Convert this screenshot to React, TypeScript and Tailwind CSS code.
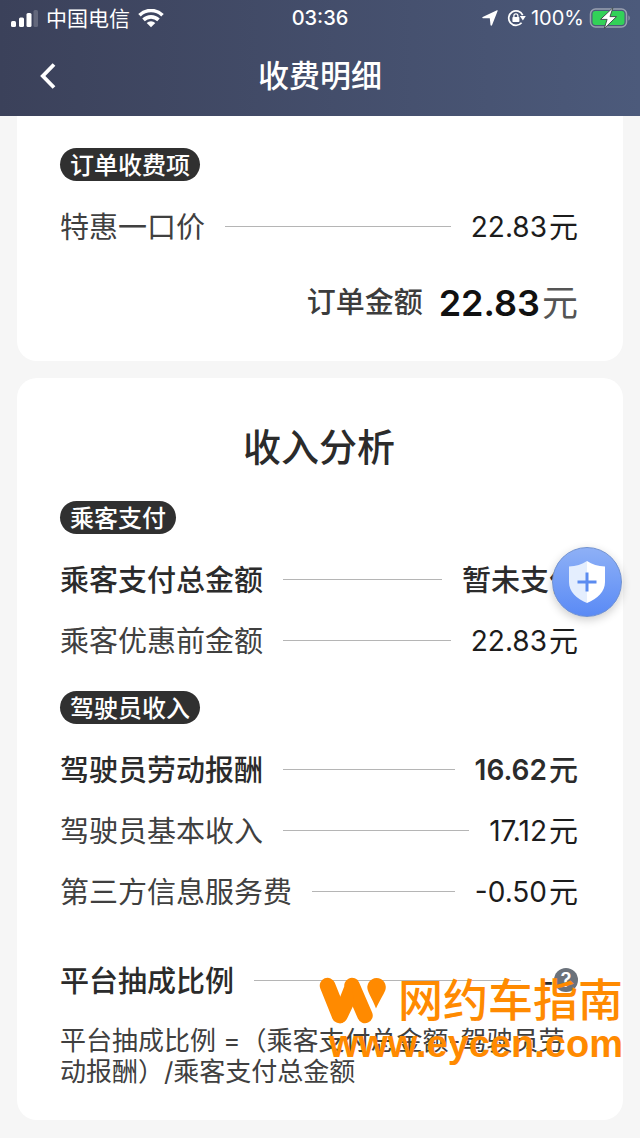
import type { ReactNode } from "react"

type FeeRow = {
  label: string
  amount?: string
  unit?: string
  strong?: boolean
}

const PASSENGER_ROWS: FeeRow[] = [
  { label: "乘客支付总金额", unit: "暂未支付", strong: true },
  { label: "乘客优惠前金额", amount: "22.83", unit: "元" },
]

const DRIVER_ROWS: FeeRow[] = [
  { label: "驾驶员劳动报酬", amount: "16.62", unit: "元", strong: true },
  { label: "驾驶员基本收入", amount: "17.12", unit: "元" },
  { label: "第三方信息服务费", amount: "-0.50", unit: "元" },
]

function StatusBar() {
  return (
    <div className="grid h-9 grid-cols-[1fr_auto_1fr] items-center px-[10px] text-xl leading-none">
      <div className="flex items-center gap-2">
        <svg width="28" height="17" viewBox="0 0 28 17" fill="currentColor" aria-hidden="true">
          <rect x="1" y="11" width="5" height="6" rx="1.5" />
          <rect x="9" y="7.5" width="5" height="9.5" rx="1.5" />
          <rect x="16.5" y="3" width="5" height="14" rx="1.5" />
          <rect x="23.5" y="0" width="4.5" height="17" rx="1.5" opacity="0.2" />
        </svg>
        <span className="text-[21px]">中国电信</span>
        <svg width="26" height="19" viewBox="0 0 26 19" fill="none" stroke="currentColor" strokeWidth="3.6" aria-hidden="true">
          <path d="M1.5 6.2a16.5 16.5 0 0 1 23 0" />
          <path d="M5.5 10.9a10.8 10.8 0 0 1 15 0" />
          <path d="M13 18.3 8.7 14a6.2 6.2 0 0 1 8.6 0z" fill="currentColor" stroke="none" />
        </svg>
      </div>
      <span className="font-medium">03:36</span>
      <div className="flex items-center justify-end gap-[5px]">
        <svg width="16" height="16" viewBox="0 0 16 16" fill="currentColor" className="mr-1" aria-hidden="true">
          <path d="M15.7.7 10 15.3c-.3.6-1.400.5-1.500-.2L7.800 8.200H.9c-.7 0-.8-.8-.2-1.100L15 .2c.5-.2.9.1.7.5z" />
        </svg>
        <svg width="19" height="18" viewBox="0 0 19 18" fill="none" aria-hidden="true">
          <path d="M15.7 6.2A7.3 7.3 0 1 0 14.6 13.8" stroke="currentColor" strokeWidth="1.7" />
          <path d="M12.8 7h6L15.900 11.6z" fill="currentColor" />
          <rect x="5.4" y="8" width="7" height="5" rx="0.8" fill="currentColor" />
          <path d="M6.900 8.200V6.800a2 2 0 0 1 4 0v1.400" stroke="currentColor" strokeWidth="1.3" />
        </svg>
        <span>100%</span>
        <svg width="41" height="22" viewBox="0 0 41 22" aria-hidden="true">
          <rect x="1.5" y="2" width="36" height="18" rx="5" fill="none" stroke="#9aa1b0" strokeWidth="1.5" />
          <rect x="3.5" y="4" width="32" height="14" rx="3" fill="#32d158" />
          <path d="M39.5 8.5c1.5.5 1.5 4.5 0 5z" fill="#9aa1b0" />
          <path d="M24 .6 11.5 12.4h6.600L15.200 21.600 27.600 9.600H21z" fill="#fff" stroke="#43504f" strokeWidth="1" />
        </svg>
      </div>
    </div>
  )
}

function Tag({ children }: { children: ReactNode }) {
  return (
    <h3 className="mb-[15px] w-fit rounded-full bg-[#303030] px-[10px] pt-0.5 text-2xl leading-[31px] font-medium text-white">
      {children}
    </h3>
  )
}

function Row({ label, amount, unit, strong }: FeeRow) {
  return (
    <div
      className={
        strong
          ? "flex items-center pt-[14px] pb-[15px] text-[29px] leading-[29px] font-medium text-[#2b2b2b]"
          : "flex items-center pt-[14px] pb-[15px] text-[29px] leading-[29px] text-[#1c1c1c]"
      }
    >
      <dt className={strong ? "pt-[3px]" : "pt-[3px] text-[#404040]"}>{label}</dt>
      <span className="mx-5 h-px flex-1 bg-[#b5b5b5]" />
      <dd className="flex items-center gap-0.5 pt-[3px]">
        {amount && <span className={strong ? "text-[28px] font-semibold" : "text-[28px]"}>{amount}</span>}
        <span>{unit}</span>
      </dd>
    </div>
  )
}

function ShieldButton() {
  return (
    <button
      type="button"
      aria-label="安全中心"
      className="absolute top-[431px] right-[18px] flex size-[70px] items-center justify-center rounded-full border border-[#6f90cf] bg-linear-to-b from-[#8eb0f6] to-[#5a8af5] shadow-[0_3px_10px_rgba(0,0,0,0.2)]"
    >
      <svg width="38" height="42" viewBox="0 0 38 42" aria-hidden="true">
        <path d="M19 0c5 3.6 11 5 18 5.4V21c0 9.5-7.5 16.5-18 21z" fill="#fff" />
        <path d="M19 0C14 3.6 8 5 1 5.4V21c0 9.5 7.5 16.5 18 21z" fill="#e4eefe" />
        <path d="M19 11.5v19M9.5 21h19" stroke="#5b8bf0" strokeWidth="3" />
      </svg>
    </button>
  )
}

function Watermark() {
  return (
    <div className="pointer-events-none absolute right-[17px] bottom-[74px] flex flex-col items-end text-[#ff8a00]">
      <div className="flex items-center gap-3">
        <svg width="67" height="47" viewBox="0 0 67 47" fill="currentColor" aria-hidden="true">
          <path d="M8.5 8.5 20.5 38.5M33 8.5 46 38.5" stroke="currentColor" strokeWidth="15.5" strokeLinecap="round" />
          <path d="M25.2 9.5 20.5 21.5 20.5 46.2c4 0 6.5-2 8-5.5L35 27 33 9z" />
          <path d="M57.5 1a9.3 9.3 0 0 1 8.6 12.800C64.500 17.500 60 25 57 31.500 54.500 25 50.500 18 49 13.800A9.300 9.300 0 0 1 57.500 1z" />
        </svg>
        <span className="text-[45px] leading-[46px] font-medium">网约车指南</span>
      </div>
      <span className="font-['Liberation_Sans',sans-serif] text-[38px] leading-10 font-bold">www.eycen.com</span>
    </div>
  )
}

export default function App() {
  return (
    <div className="min-h-screen bg-[#f6f6f6] font-[Inter,'Noto_Sans_CJK_SC',sans-serif] text-[#2b2b2b]">
      <header className="bg-linear-to-r from-[#3b415a] to-[#4c5a7b] text-white">
        <StatusBar />
        <div className="grid h-20 grid-cols-[1fr_auto_1fr] items-center px-9">
          <button type="button" aria-label="返回" className="flex size-6 items-center justify-center">
            <svg width="16" height="26" viewBox="0 0 16 26" fill="none" stroke="currentColor" strokeWidth="3.8" aria-hidden="true">
              <path d="M14 1.5 2.8 13 14 24.5" />
            </svg>
          </button>
          <h1 className="text-[31px] leading-10 font-medium">收费明细</h1>
        </div>
      </header>

      <main className="relative px-[17px] pb-[18px]">
        <section className="rounded-b-[20px] bg-white pt-8 pr-[45px] pb-9 pl-[43px]">
          <Tag>订单收费项</Tag>
          <dl>
            <Row label="特惠一口价" amount="22.83" unit="元" />
          </dl>
          <div className="mt-6 flex items-center justify-end leading-[44px]">
            <span className="mr-4 text-[29px] font-medium text-[#3c3c3c]">订单金额</span>
            <strong className="mr-0.5 text-[36px] font-semibold text-[#111111]">22.83</strong>
            <span className="text-[36px] text-[#555555]">元</span>
          </div>
        </section>

        <section className="mt-[17px] rounded-[20px] bg-white pt-[45px] pr-[45px] pb-[33px] pl-[43px]">
          <h2 className="mb-[30px] text-center text-[38px] leading-[48px] font-medium">收入分析</h2>
          <Tag>乘客支付</Tag>
          <dl className="mb-5">
            {PASSENGER_ROWS.map((row) => (
              <Row key={row.label} {...row} />
            ))}
          </dl>
          <Tag>驾驶员收入</Tag>
          <dl>
            {DRIVER_ROWS.map((row) => (
              <Row key={row.label} {...row} />
            ))}
          </dl>

          <div className="mt-7 flex items-center pt-[14px] pb-[15px] text-[29px] leading-[29px] font-medium">
            <span className="pt-[3px]">平台抽成比例</span>
            <span className="mx-5 h-px flex-1 bg-[#b5b5b5]" />
            <span className="pt-[3px]">-</span>
            <button
              type="button"
              aria-label="抽成比例说明"
              className="flex size-6 items-center justify-center rounded-full bg-[#6b727b] text-xl leading-none font-semibold text-white"
            >
              ?
            </button>
          </div>
          <p className="mt-[14px] text-[26px] leading-[31px] text-[#404040]">
            平台抽成比例 =（乘客支付总金额-驾驶员劳动报酬）/乘客支付总金额
          </p>
        </section>

        <ShieldButton />
        <Watermark />
      </main>
    </div>
  )
}
